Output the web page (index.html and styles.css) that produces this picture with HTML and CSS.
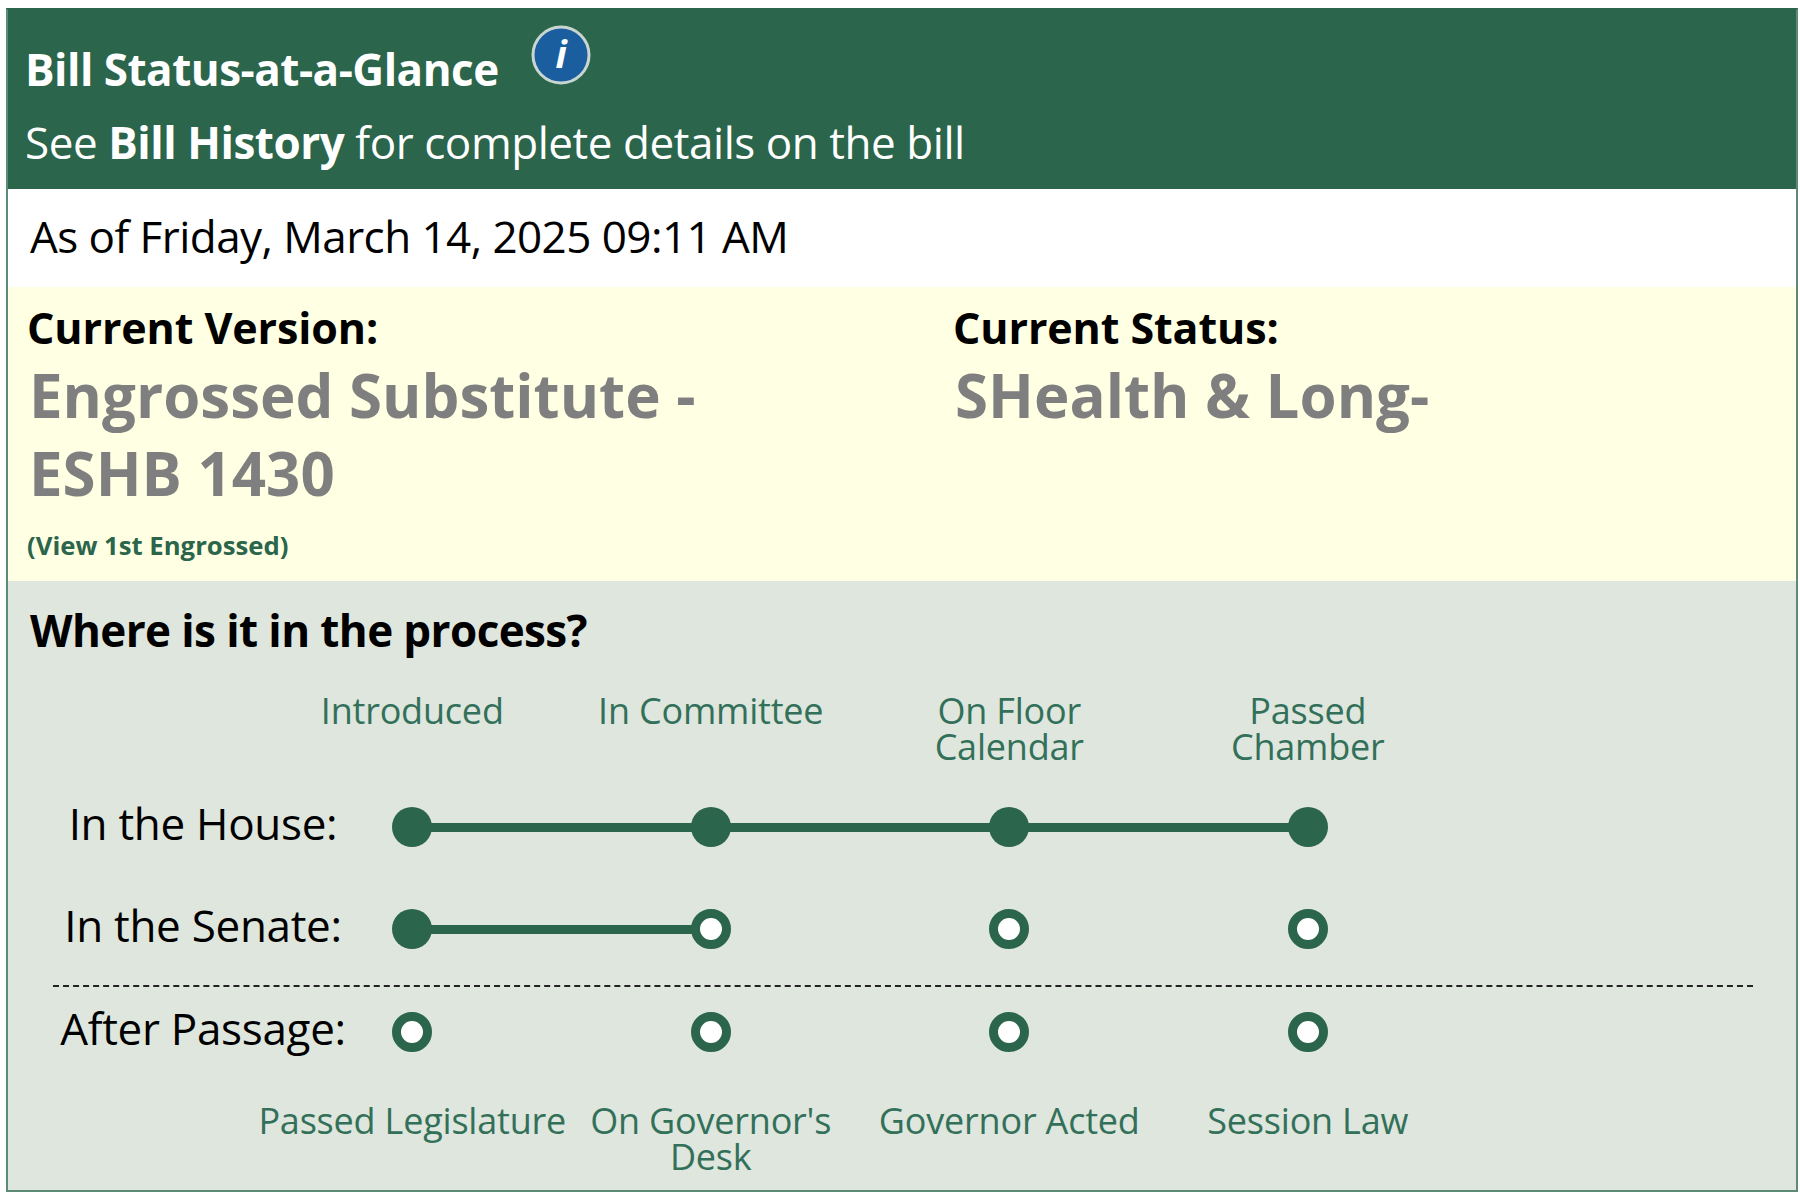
FILE: index.html
```html
<!DOCTYPE html>
<html lang="en">
<head>
    <meta charset="UTF-8">
    <title>Bill Status-at-a-Glance</title>
    <link rel="stylesheet" href="styles.css">
</head>
<body>
    <div class="glance">
        <div class="glance-header">
            <div class="glance-title">
                <span>Bill Status-at-a-Glance</span>
                <svg class="info-icon" viewBox="0 0 60 60" aria-hidden="true">
                    <circle cx="30" cy="30" r="28" fill="#1b5e9f" stroke="#c9d6d0" stroke-width="3"/>
                    <text x="30" y="43" text-anchor="middle" class="info-letter">i</text>
                </svg>
            </div>
            <div class="glance-sub">See <b>Bill History</b> for complete details on the bill</div>
        </div>

        <div class="as-of">As of Friday, March 14, 2025 09:11 AM</div>

        <div class="current">
            <div class="current-col version">
                <div class="current-label">Current Version:</div>
                <div class="current-value">Engrossed Substitute -<br>ESHB 1430</div>
                <a class="view-link">(View 1st Engrossed)</a>
            </div>
            <div class="current-col">
                <div class="current-label">Current Status:</div>
                <div class="current-value">SHealth &amp; Long-</div>
            </div>
        </div>

        <div class="process">
            <div class="process-title">Where is it in the process?</div>

            <div class="row names">
                <div></div>
                <div class="step-name">Introduced</div>
                <div class="step-name">In Committee</div>
                <div class="step-name">On Floor<br>Calendar</div>
                <div class="step-name">Passed<br>Chamber</div>
            </div>

            <div class="row track house">
                <div class="row-label">In the House:</div>
                <div class="step link"><span class="dot"></span></div>
                <div class="step link"><span class="dot"></span></div>
                <div class="step link"><span class="dot"></span></div>
                <div class="step"><span class="dot"></span></div>
            </div>

            <div class="row track senate">
                <div class="row-label">In the Senate:</div>
                <div class="step link"><span class="dot"></span></div>
                <div class="step"><span class="dot open"></span></div>
                <div class="step"><span class="dot open"></span></div>
                <div class="step"><span class="dot open"></span></div>
            </div>

            <div class="divider"></div>

            <div class="row track after">
                <div class="row-label">After Passage:</div>
                <div class="step"><span class="dot open"></span></div>
                <div class="step"><span class="dot open"></span></div>
                <div class="step"><span class="dot open"></span></div>
                <div class="step"><span class="dot open"></span></div>
            </div>

            <div class="row names bottom">
                <div></div>
                <div class="step-name">Passed Legislature</div>
                <div class="step-name">On Governor's<br>Desk</div>
                <div class="step-name">Governor Acted</div>
                <div class="step-name">Session Law</div>
            </div>
        </div>
    </div>
</body>
</html>
```

FILE: styles.css
```css
body {
    margin: 0;
    background-color: #ffffff;
    font-family: "Open Sans", "Liberation Sans", sans-serif;
    color: #000000;
}

.glance {
    width: 1792px;
    height: 1184px;
    margin: 8px 0 0 6px;
    border: 2px solid #5c8a75;
    border-top-color: #2b654b;
    box-sizing: border-box;
    display: flex;
    flex-direction: column;
}

.glance-header {
    height: 179px;
    background-color: #2b654b;
    color: #ffffff;
    padding: 0 0 0 17px;
    box-sizing: border-box;
    flex: none;
}

.glance-title {
    display: flex;
    align-items: flex-start;
    height: 104px;
    font-size: 44px;
    font-weight: 700;
    letter-spacing: -0.5px;
}

.glance-title span {
    margin-top: 29px;
}

.info-icon {
    width: 60px;
    height: 60px;
    margin: 15px 0 0 32px;
}

.info-letter {
    font-family: "Open Sans", sans-serif;
    font-size: 38px;
    font-weight: 700;
    font-style: italic;
    fill: #ffffff;
}

.glance-sub {
    font-size: 44px;
    letter-spacing: -0.45px;
    line-height: 57px;
}

.as-of {
    height: 98px;
    flex: none;
    padding-left: 22px;
    box-sizing: border-box;
    font-size: 44px;
    line-height: 94px;
    letter-spacing: -0.55px;
}

.current {
    height: 294px;
    flex: none;
    background-color: #ffffe3;
    display: flex;
    padding-left: 19px;
    box-sizing: border-box;
}

.current-col {
    flex: 1;
}

.current-col.version {
    flex: none;
    width: 926px;
}

.current-label {
    font-size: 43px;
    font-weight: 700;
    line-height: 54px;
    margin-top: 14px;
    letter-spacing: -0.1px;
}

.current-value {
    font-size: 60px;
    font-weight: 700;
    line-height: 78px;
    color: #7f7f7f;
    margin: 1px 0 0 2px;
}

.view-link {
    display: block;
    margin-top: 16px;
    font-size: 25.7px;
    font-weight: 700;
    color: #2b654b;
}

.process {
    flex: 1;
    background-color: #dee6dd;
    padding: 0 43px 0 45px;
}

.process-title {
    font-size: 44px;
    font-weight: 700;
    line-height: 57px;
    margin: 21px 0 0 -23px;
    letter-spacing: -0.6px;
}

.row {
    display: grid;
    grid-template-columns: 210px repeat(4, 298.5px);
}

.names {
    margin-top: 34px;
    height: 72px;
}

.step-name {
    justify-self: center;
    font-size: 36px;
    line-height: 36px;
    text-align: center;
    color: #33705a;
    letter-spacing: -0.2px;
    white-space: nowrap;
}

.track {
    align-items: center;
}

.house {
    margin-top: 28px;
    height: 60px;
}

.senate {
    margin-top: 42px;
    height: 60px;
}

.after {
    margin-top: 11px;
    height: 60px;
}

.row-label {
    width: 300px;
    padding-bottom: 7px;
    text-align: center;
    font-size: 44px;
    letter-spacing: -0.3px;
    white-space: nowrap;
}

.step {
    position: relative;
    display: flex;
    justify-content: center;
}

.step.link::after {
    content: "";
    position: absolute;
    left: 50%;
    top: 16px;
    width: 100%;
    height: 9px;
    background-color: #2b654b;
}

.dot {
    width: 40px;
    height: 40px;
    border-radius: 50%;
    background-color: #2b654b;
    box-sizing: border-box;
    position: relative;
    z-index: 1;
}

.dot.open {
    background-color: #ffffff;
    border: 9px solid #2b654b;
}

.divider {
    border-top: 2px dashed #222222;
    margin-top: 30px;
}

.bottom {
    margin-top: 45px;
}
```
